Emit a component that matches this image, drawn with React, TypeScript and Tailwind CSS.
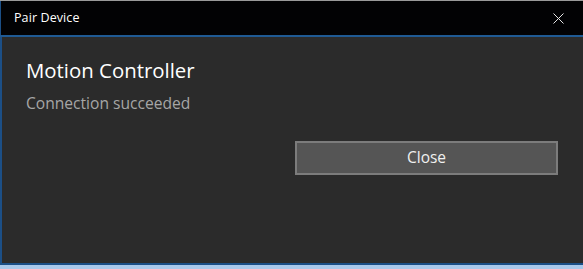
import React from "react";

const App = () => {
    return (
        <div
            className="w-[583px] h-[269px] flex flex-col bg-[#2b2b2b] overflow-hidden"
            style={{ fontFamily: '"Open Sans", "Noto Sans", sans-serif' }}
        >
            <div className="h-px bg-[#9a9a9a] shrink-0" />
            <div className="h-[34px] shrink-0 bg-[#020204] flex items-center justify-between pl-[13px] pr-[19px] border-l border-[#1c4f86]">
                <span className="text-[12.5px] text-white tracking-[0.1px]">Pair Device</span>
                <svg width="11" height="11" viewBox="0 0 11 11" className="text-[#e6e6e6]">
                    <path d="M0.5 0.5 L10.5 10.5 M10.5 0.5 L0.5 10.5" stroke="currentColor" strokeWidth="1" />
                </svg>
            </div>
            <div className="h-[2px] shrink-0 bg-[#1f5a94]" />
            <div className="flex-1 flex flex-col border-l-2 border-[#1c4f86] pl-[24px] pr-[25px] pt-[20px]">
                <h1 className="text-[20.4px] leading-[27px] text-white">Motion Controller</h1>
                <p className="text-[15.6px] leading-[21px] mt-[9px] text-[#a6a6a6]">Connection succeeded</p>
                <div className="flex justify-end mt-[27px]">
                    <button className="w-[263px] h-[34px] bg-[#555555] border-2 border-[#7c7c7c] text-[15.5px] text-[#f0f0f0]">
                        Close
                    </button>
                </div>
            </div>
            <div className="h-[2px] shrink-0 bg-[#1b4f86]" />
            <div className="h-[4px] shrink-0 bg-[#a9c8ea]" />
        </div>
    );
};

export default App;
